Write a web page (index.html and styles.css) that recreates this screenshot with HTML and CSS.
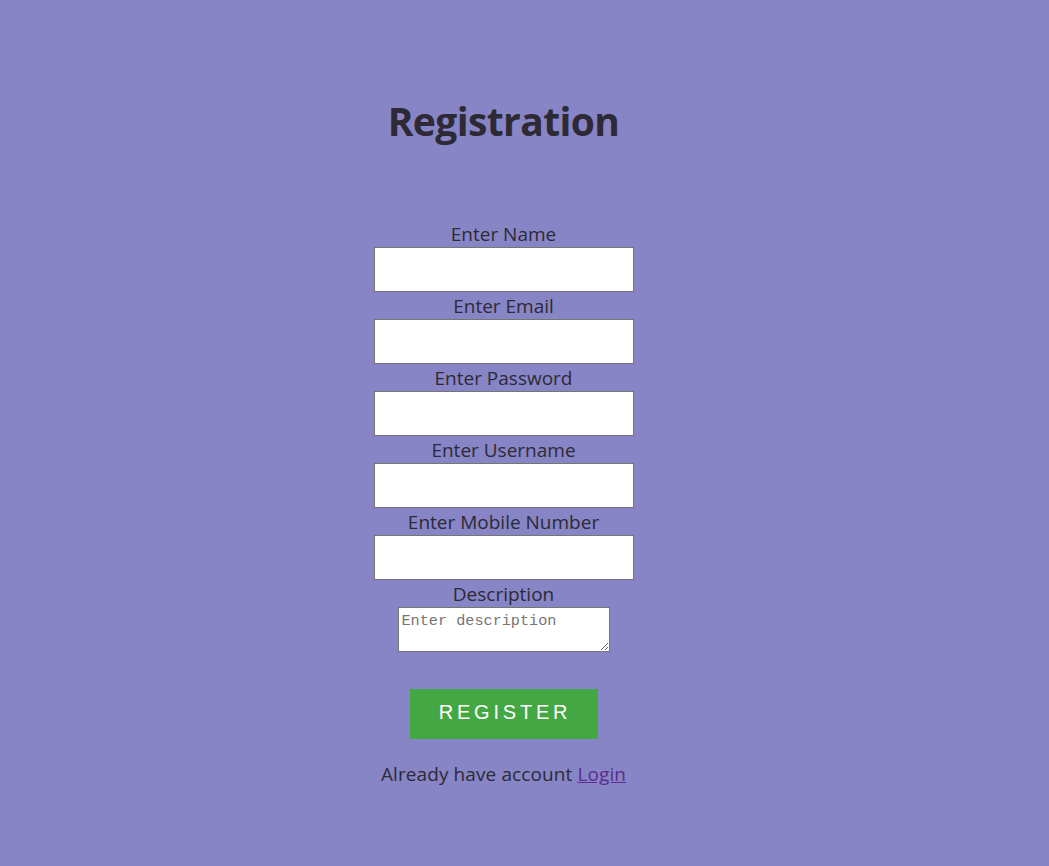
FILE: index.html
```html
<!DOCTYPE html>
<html lang="en">
<head>
<meta charset="utf-8">
<title>Registration</title>
<link rel="stylesheet" href="styles.css">
</head>
<body>
<div class="page">
  <h1 class="title">Registration</h1>
  <form class="form">
    <label class="label" for="name">Enter Name</label>
    <input class="field" id="name" type="text">
    <label class="label" for="email">Enter Email</label>
    <input class="field" id="email" type="email">
    <label class="label" for="password">Enter Password</label>
    <input class="field" id="password" type="password">
    <label class="label" for="username">Enter Username</label>
    <input class="field" id="username" type="text">
    <label class="label" for="mobile">Enter Mobile Number</label>
    <input class="field" id="mobile" type="text">
    <label class="label" for="desc">Description</label>
    <textarea class="area" id="desc" placeholder="Enter description"></textarea>
    <button class="btn" type="button">REGISTER</button>
    <p class="switch">Already have account <a class="link" href="#">Login</a></p>
  </form>
</div>
</body>
</html>
```
FILE: styles.css
```css
html, body {
  margin: 0;
  padding: 0;
  background: #8785c5;
}
body {
  font-family: "Open Sans", "Noto Sans", sans-serif;
  color: #2d2a36;
  min-height: 866px;
}
.page {
  width: 1007px;
  display: flex;
  flex-direction: column;
  align-items: center;
  padding-top: 94px;
}
.title {
  margin: 0;
  font-size: 39px;
  line-height: 54px;
  font-weight: 700;
  letter-spacing: -0.6px;
}
.form {
  margin-top: 72px;
  display: flex;
  flex-direction: column;
  align-items: center;
}
.label {
  font-size: 19px;
  line-height: 25px;
  padding-top: 2px;
  letter-spacing: 0;
}
.field {
  display: block;
  width: 260px;
  height: 45px;
  box-sizing: border-box;
  margin: 0;
  border: 1px solid #767676;
  background: #fff;
  padding: 2px;
}
.area {
  display: block;
  width: 212px;
  height: 45px;
  box-sizing: border-box;
  margin: 0;
  border: 1px solid #767676;
  background: #fff;
  padding: 4px 3px 2px;
  font-family: "Liberation Mono", "DejaVu Sans Mono", monospace;
  font-size: 15.2px;
  line-height: 18px;
  color: #333;
}
.area::placeholder {
  color: #757575;
}
.btn {
  margin-top: 37px;
  width: 188px;
  height: 50px;
  border: none;
  background: #43a843;
  color: #fff;
  font-family: "Liberation Sans", Arial, sans-serif;
  font-size: 20px;
  letter-spacing: 3.8px;
  padding: 0 0 3px 3px;
  cursor: pointer;
}
.switch {
  margin: 22px 0 0;
  font-size: 19px;
  line-height: 27px;
  letter-spacing: 0.1px;
}
.link {
  color: #5b2d90;
}
```
